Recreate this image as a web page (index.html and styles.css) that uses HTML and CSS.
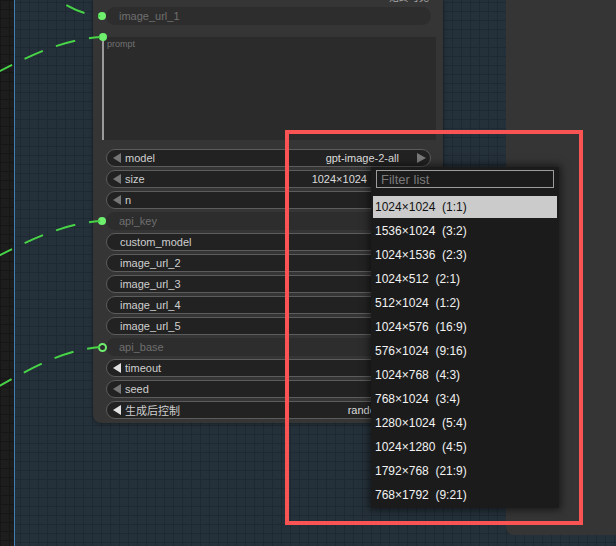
FILE: index.html
```html
<!DOCTYPE html>
<html lang="en">
	<head>
		<meta charset="UTF-8" />
		<meta name="viewport" content="width=device-width, initial-scale=1.0" />
		<title>Node editor</title>
		<link rel="stylesheet" href="styles.css">
	</head>
	<body>
		<div class="workspace">
			<div class="strip"></div>
			<div class="edge"></div>
			<div class="board">
				<div class="node">
					<span class="node-title">始终可见</span>

					<div class="row input">
						<span class="slot"></span>
						<span class="label">image_url_1</span>
					</div>

					<div class="prompt">
						<span class="slot"></span>
						<span class="prompt-label">prompt</span>
					</div>

					<div class="row combo">
						<span class="arr-l"></span>
						<span class="label">model</span>
						<span class="value">gpt-image-2-all</span>
						<span class="arr-r"></span>
					</div>
					<div class="row combo">
						<span class="arr-l"></span>
						<span class="label">size</span>
						<span class="value short">1024×1024</span>
						<span class="arr-r"></span>
					</div>
					<div class="row combo">
						<span class="arr-l"></span>
						<span class="label">n</span>
						<span class="arr-r"></span>
					</div>
					<div class="row input">
						<span class="slot"></span>
						<span class="label">api_key</span>
					</div>
					<div class="row plain"><span class="label">custom_model</span></div>
					<div class="row plain"><span class="label">image_url_2</span></div>
					<div class="row plain"><span class="label">image_url_3</span></div>
					<div class="row plain"><span class="label">image_url_4</span></div>
					<div class="row plain"><span class="label">image_url_5</span></div>
					<div class="row input">
						<span class="slot hollow"></span>
						<span class="label">api_base</span>
					</div>
					<div class="row combo">
						<span class="arr-l lit"></span>
						<span class="label">timeout</span>
						<span class="arr-r"></span>
					</div>
					<div class="row combo">
						<span class="arr-l"></span>
						<span class="label">seed</span>
						<span class="arr-r"></span>
					</div>
					<div class="row combo">
						<span class="arr-l lit"></span>
						<span class="label cjk">生成后控制</span>
						<span class="value">randomize</span>
						<span class="arr-r"></span>
					</div>
				</div>
				<div class="panel"></div>
			</div>
		</div>

		<!-- links into the node -->
		<svg class="wires" width="616" height="546" viewBox="0 0 616 546">
			<path d="M 38 -14 C 62 4, 78 14, 100 16" />
			<path d="M -6 74 C 30 56, 60 40, 100 37" />
			<path d="M -6 258 C 30 240, 62 224, 100 221" />
			<path d="M -6 389 C 30 369, 62 350, 100 347" />
		</svg>

		<div class="menu">
			<div class="filter">Filter list</div>
			<div class="items">
				<div class="item active">1024×1024  (1:1)</div>
				<div class="item">1536×1024  (3:2)</div>
				<div class="item">1024×1536  (2:3)</div>
				<div class="item">1024×512  (2:1)</div>
				<div class="item">512×1024  (1:2)</div>
				<div class="item">1024×576  (16:9)</div>
				<div class="item">576×1024  (9:16)</div>
				<div class="item">1024×768  (4:3)</div>
				<div class="item">768×1024  (3:4)</div>
				<div class="item">1280×1024  (5:4)</div>
				<div class="item">1024×1280  (4:5)</div>
				<div class="item">1792×768  (21:9)</div>
				<div class="item">768×1792  (9:21)</div>
			</div>
		</div>

		<div class="highlight"></div>
	</body>
</html>
```

FILE: styles.css
```css
body {
	margin: 0;
	width: 616px;
	height: 546px;
	overflow: hidden;
	position: relative;
	font-family: "Liberation Sans", Arial, "Noto Sans CJK SC", sans-serif;
	background: #232f38;
}

.workspace {
	display: flex;
	height: 546px;
}

.strip {
	width: 14px;
	background-color: #1d1d1d;
	background-image:
		linear-gradient(#161616 1px, transparent 1px),
		linear-gradient(90deg, #161616 1px, transparent 1px);
	background-size: 9px 9px;
}

.edge {
	width: 1px;
	background: #3f7fb6;
}

.board {
	flex: 1;
	display: flex;
	align-items: flex-start;
	background-color: #25313a;
	background-image:
		linear-gradient(#1e2931 1px, transparent 1px),
		linear-gradient(90deg, #1e2931 1px, transparent 1px);
	background-size: 9px 9px;
	background-position: 5px 2px;
}

/* node */
.node {
	position: relative;
	margin-left: 78px;
	width: 350px;
	box-sizing: border-box;
	padding: 7px 12px 4px 13px;
	background: #353535;
	border-radius: 0 0 8px 8px;
	display: flex;
	flex-direction: column;
	gap: 3px;
	box-shadow: 0 1px 4px rgba(0, 0, 0, 0.35);
}

.node-title {
	position: absolute;
	top: -10px;
	right: 14px;
	font-size: 10px;
	line-height: 14px;
	color: #a8a8a8;
	font-family: "Noto Sans CJK SC", sans-serif;
}

.row {
	position: relative;
	height: 18px;
	box-sizing: border-box;
	border: 1px solid #5c5c5c;
	border-radius: 9px;
	background: #222222;
	display: flex;
	align-items: center;
	font-size: 11px;
	color: #cfcfcf;
	white-space: pre;
}

.row .label {
	flex: 1;
}

.row.combo {
	padding: 0 4px 0 6px;
}

.row.plain {
	padding-left: 13px;
}

.row.input {
	border-color: transparent;
	background: #2d2d2d;
	color: #6f6f6f;
	padding-left: 12px;
}

.cjk {
	font-family: "Noto Sans CJK SC", sans-serif;
	font-size: 11px;
}

.arr-l {
	width: 0;
	height: 0;
	border-top: 5px solid transparent;
	border-bottom: 5px solid transparent;
	border-right: 8px solid #767676;
	margin-right: 4px;
}

.arr-l.lit {
	border-right-color: #e2e2e2;
}

.arr-r {
	width: 0;
	height: 0;
	border-top: 5px solid transparent;
	border-bottom: 5px solid transparent;
	border-left: 9px solid #7a7a7a;
}

.value {
	margin-right: 18px;
	color: #dcdcdc;
}

.value.short {
	margin-right: 50px;
}

.slot {
	position: absolute;
	left: -9px;
	top: 4px;
	width: 8px;
	height: 8px;
	border-radius: 50%;
	background: #6ef06e;
}

.slot.hollow {
	box-sizing: border-box;
	border: 2px solid #6ef06e;
	background: #2d2d2d;
	width: 9px;
	height: 9px;
}

.prompt {
	position: relative;
	height: 103px;
	margin: 9px -5px 6px -4px;
	background: #2b2b2b;
	border-left: 2px solid #9a9a9a;
}

.prompt .slot {
	left: -5px;
	top: -4px;
}

.prompt-label {
	display: block;
	padding: 2px 0 0 3px;
	font-size: 9px;
	color: #727272;
}

.panel {
	margin-left: 63px;
	flex: 1;
	height: 535px;
	background: #353535;
	border-bottom-left-radius: 8px;
}

/* wires */
.wires {
	position: absolute;
	left: 0;
	top: 0;
	pointer-events: none;
}

.wires path {
	fill: none;
	stroke: #47d447;
	stroke-width: 2;
	stroke-dasharray: 20 14;
}

/* dropdown */
.menu {
	position: absolute;
	left: 371px;
	top: 167px;
	width: 188px;
	height: 341px;
	box-sizing: border-box;
	padding: 3px 2px 0 2px;
	background: #1b1b1b;
	box-shadow: 0 0 8px 2px rgba(0, 0, 0, 0.55);
}

.filter {
	height: 18px;
	margin: 0 3px 8px 3px;
	box-sizing: border-box;
	border: 1px solid #9c9c9c;
	padding: 1px 0 0 4px;
	font-size: 13px;
	line-height: 15px;
	color: #7a7a7a;
}

.items {
	display: flex;
	flex-direction: column;
	gap: 2px;
}

.item {
	height: 22px;
	line-height: 22px;
	padding-left: 2px;
	font-size: 12px;
	color: #f2f2f2;
	white-space: pre;
}

.item.active {
	background: #cbcbcb;
	color: #111111;
}

/* annotation box */
.highlight {
	position: absolute;
	left: 285px;
	top: 130px;
	width: 298px;
	height: 395px;
	box-sizing: border-box;
	border: 4px solid #fa5353;
}
```
